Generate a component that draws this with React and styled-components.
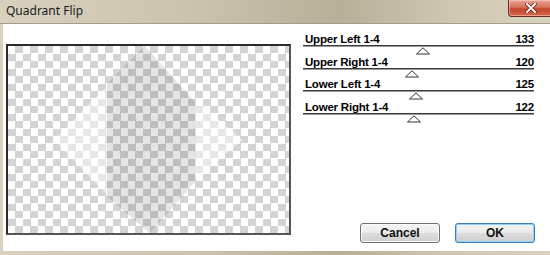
import styled, { createGlobalStyle } from "styled-components";

const GlobalStyle = createGlobalStyle`
  html, body { margin: 0; padding: 0; background: #d4ccb9; }
  body { font-family: "Liberation Sans", Arial, sans-serif; }
`;

const sliders = [
  { label: "Upper Left 1-4", value: 133 },
  { label: "Upper Right 1-4", value: 120 },
  { label: "Lower Left 1-4", value: 125 },
  { label: "Lower Right 1-4", value: 122 },
];

const Window = styled.div`
  width: 550px;
  height: 255px;
  display: flex;
  flex-direction: column;
  overflow: hidden;
  background: linear-gradient(90deg, #d8d1bf 0%, #cbc3ae 35%, #b8af98 62%, #cfc7b2 82%, #d9d2c0 100%);
`;

const TitleBar = styled.div`
  height: 24px;
  flex: none;
  display: flex;
  align-items: flex-start;
  justify-content: space-between;
  box-sizing: border-box;
  padding-left: 6px;
  border-bottom: 1px solid #a59d8a;
`;

const Title = styled.span`
  font-family: "Noto Sans", "Open Sans", sans-serif;
  font-size: 12px;
  line-height: 22px;
  color: #1b1b1b;
`;

const CloseButton = styled.div`
  width: 44px;
  height: 16px;
  margin-right: -4px;
  border: 1px solid #6b2a1c;
  border-top: none;
  border-radius: 0 0 4px 4px;
  background: linear-gradient(#e9a597 0%, #d7725c 45%, #c2452b 55%, #d86a4d 100%);
  display: flex;
  align-items: center;
  justify-content: center;
  box-shadow: inset 0 0 0 1px rgba(255, 220, 210, 0.5);
`;

const Content = styled.div`
  flex: 1;
  margin-left: 3px;
  margin-bottom: 4px;
  background: #fff;
  display: flex;
  padding: 20px 0 8px 3px;
  box-sizing: border-box;
`;

const Preview = styled.div`
  position: relative;
  width: 285px;
  height: 191px;
  flex: none;
  box-sizing: border-box;
  border: 2px solid #2a2a2a;
  border-right-color: #555;
  border-bottom-color: #555;
  background-color: #fff;
  background-image: conic-gradient(#d4d4d4 25%, #fff 0 50%, #d4d4d4 0 75%, #fff 0);
  background-size: 15px 15px;
  overflow: hidden;
`;

const Overlay = styled.svg`
  position: absolute;
  left: 0;
  top: 0;
`;

const Side = styled.div`
  margin-left: 12px;
  width: 232px;
  display: flex;
  flex-direction: column;
  margin-top: -11px;
`;

const SliderRow = styled.div`
  height: 22.6px;
  display: flex;
  flex-direction: column;
`;

const SliderHead = styled.div`
  display: flex;
  justify-content: space-between;
  font-size: 11.5px;
  letter-spacing: -0.2px;
  font-weight: bold;
  line-height: 12px;
  height: 12px;
  color: #000;
  padding: 0 1px 0 2px;
`;

const Track = styled.div`
  height: 1px;
  background: #3a3a3a;
  border-bottom: 1px solid #9a9a9a;
  width: 231px;
`;

const ThumbArea = styled.div`
  position: relative;
  height: 8px;
  width: 231px;
`;

const Thumb = styled.svg`
  position: absolute;
  top: 0;
  transform: translateX(-7px);
`;

const Buttons = styled.div`
  margin-top: auto;
  display: flex;
  justify-content: flex-end;
  gap: 15px;
`;

const Button = styled.button`
  width: 80px;
  height: 20px;
  padding: 0;
  border-radius: 3px;
  border: 1px solid ${(p) => (p.$primary ? "#3c7fb1" : "#707070")};
  background: linear-gradient(#f3f3f3 0%, #ebebeb 50%, #dddddd 51%, #cfcfcf 100%);
  box-shadow: inset 0 0 0 1px ${(p) => (p.$primary ? "#8fd3f4" : "#fbfbfb")};
  font-family: "Liberation Sans", Arial, sans-serif;
  font-size: 12px;
  font-weight: bold;
  color: #111;
`;

function Slider({ label, value }) {
  return (
    <SliderRow>
      <SliderHead>
        <span>{label}</span>
        <span>{value}</span>
      </SliderHead>
      <Track />
      <ThumbArea>
        <Thumb
          width="14"
          height="8"
          viewBox="0 0 14 8"
          style={{ left: `${(value / 255) * 100}%` }}
        >
          <polygon points="0.5,7 7,0.8 13.5,7" fill="#fff" stroke="#333" strokeWidth="1" />
        </Thumb>
      </ThumbArea>
    </SliderRow>
  );
}

export default function App() {
  return (
    <>
      <GlobalStyle />
      <Window>
        <TitleBar>
          <Title>Quadrant Flip</Title>
          <CloseButton>
            <svg width="12" height="10" viewBox="0 0 12 10">
              <path d="M2 1 L10 9 M10 1 L2 9" stroke="#5a1d12" strokeWidth="3.4" strokeLinecap="square" />
              <path d="M2 1 L10 9 M10 1 L2 9" stroke="#fff" strokeWidth="2" strokeLinecap="square" />
            </svg>
          </CloseButton>
        </TitleBar>
        <Content>
          <Preview>
            <Overlay width="281" height="187" viewBox="0 0 281 187">
              <polygon points="46,94 99,40 99,149" fill="rgba(255,255,255,0.45)" />
              <polygon points="235,94 187,55 187,133" fill="rgba(255,255,255,0.45)" />
              <polygon
                points="137,0 187,56 187,136 142,187 99,150 99,38"
                fill="rgba(0,0,0,0.1)"
              />
              <polyline points="99,38 137,0" stroke="rgba(230,120,140,0.18)" fill="none" />
              <polyline points="99,150 142,187" stroke="rgba(230,120,140,0.18)" fill="none" />
              <line x1="99" y1="80" x2="99" y2="110" stroke="rgba(230,120,140,0.15)" />
              <line x1="187" y1="80" x2="187" y2="110" stroke="rgba(230,120,140,0.15)" />
            </Overlay>
          </Preview>
          <Side>
            {sliders.map((s) => (
              <Slider key={s.label} label={s.label} value={s.value} />
            ))}
            <Buttons>
              <Button>Cancel</Button>
              <Button $primary>OK</Button>
            </Buttons>
          </Side>
        </Content>
      </Window>
    </>
  );
}
